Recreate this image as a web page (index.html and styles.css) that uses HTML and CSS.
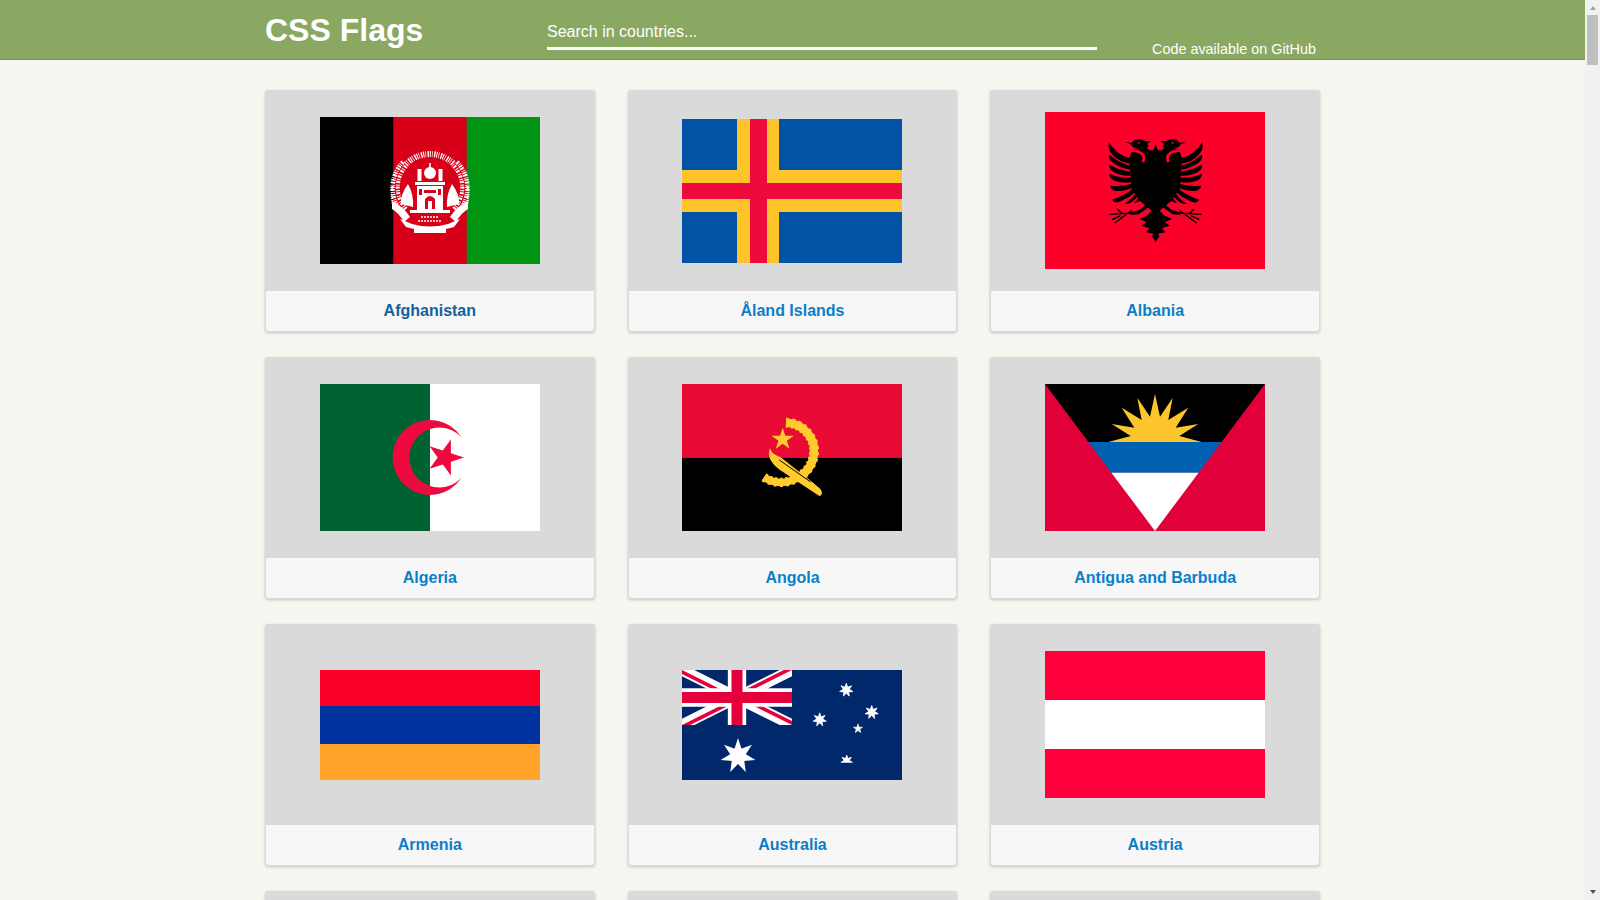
FILE: index.html
```html
<!DOCTYPE html>
<html>
<head>
    <meta name="viewport" content="width=device-width, initial-scale=1.0">
    <title>CSS Flags</title>
    <link rel="stylesheet" href="styles.css">
</head>
<body>
    <header class="topbar">
        <div class="topbar-inner">
            <h1 class="logo">CSS Flags</h1>
            <input class="search" type="text" placeholder="Search in countries...">
            <a class="github" href="#">Code available on GitHub</a>
        </div>
    </header>

    <main class="flags">
        <article class="card">
            <div class="flag-box">
                <svg class="flag" viewBox="0 0 220 147">
                    <rect width="220" height="147" fill="#d80018"/>
                    <rect width="73.3" height="147" fill="#000"/>
                    <rect x="146.7" width="73.3" height="147" fill="#009614"/>
                    <!-- wreath -->
                    <path d="M86 47A34 34 0 0 1 134 47" fill="none" stroke="#fff" stroke-width="6" stroke-dasharray="1 1.1 .7 1.5 1.4 .9"/>
                    <path d="M79 92A37.5 37.5 0 0 1 83 45M141 92A37.5 37.5 0 0 0 137 45" fill="none" stroke="#fff" stroke-width="4.5" stroke-dasharray="1.4 1 .8 1.3 2 .9"/>
                    <path d="M86 92A32 32 0 0 1 87 48M134 92A32 32 0 0 0 133 48" fill="none" stroke="#fff" stroke-width="4" stroke-dasharray="2 1 1 1.6"/>
                    <path d="M73.5 90A41 41 0 0 1 73 68M146.5 90A41 41 0 0 0 147 68" fill="none" stroke="#fff" stroke-width="2" stroke-dasharray="1 1"/>
                    <!-- mosque -->
                    <g fill="#fff">
                        <circle cx="110" cy="56" r="6"/>
                        <rect x="109.2" y="46" width="1.6" height="5"/>
                        <rect x="97.5" y="52" width="4" height="12"/>
                        <rect x="118.5" y="52" width="4" height="12"/>
                        <rect x="95" y="65" width="30" height="3"/>
                        <rect x="97" y="69" width="26" height="24"/>
                        <rect x="90" y="93" width="40" height="3"/>
                        <path d="M88 67Q80 78 81 87L93 90Q94 78 88 67Z"/>
                        <path d="M132 67Q140 78 139 87L127 90Q126 78 132 67Z"/>
                        <path d="M72 84Q84 90 90 100L84 105Q79 96 72 92Z"/>
                        <path d="M148 84Q136 90 130 100L136 105Q141 96 148 92Z"/>
                        <path d="M80 102L92 107Q110 112 128 107L140 102L134 110L126 112V116H94V112L86 110Z"/>
                    </g>
                    <g fill="#d80018">
                        <rect x="104" y="73" width="12" height="3"/>
                        <path d="M105 92V82Q110 76 115 82V92H112V84H108V92Z"/>
                        <rect x="99" y="72" width="3" height="6"/>
                        <rect x="118" y="72" width="3" height="6"/>
                    </g>
                    <path d="M101 100H119M98 104H122" stroke="#fff" stroke-width="1.5" stroke-dasharray="2 1"/>
                </svg>
            </div>
            <h2 class="name"><a class="hovered" href="#">Afghanistan</a></h2>
        </article>

        <article class="card">
            <div class="flag-box">
                <svg class="flag" viewBox="0 0 220 144">
                    <rect width="220" height="144" fill="#0053a5"/>
                    <rect x="55" width="42" height="144" fill="#ffc429"/>
                    <rect y="51" width="220" height="42" fill="#ffc429"/>
                    <rect x="68" width="17" height="144" fill="#ef0a3c"/>
                    <rect y="64" width="220" height="16" fill="#ef0a3c"/>
                </svg>
            </div>
            <h2 class="name"><a href="#">Åland Islands</a></h2>
        </article>

        <article class="card">
            <div class="flag-box">
                <svg class="flag" viewBox="0 0 220 157">
                    <rect width="220" height="157" fill="#fb0029"/>
                    <g transform="translate(45 13) scale(.3333)">
                        <g id="eagle-half">
                            <!-- body and neck -->
                            <path d="M198 88L198 56L190 76L178 76L168 66L128 72L118 100L124 190L150 228L198 268Z"/>
                            <!-- head -->
                            <path d="M104 50L124 54L134 44L150 42L166 48L184 48L172 56L176 66L150 72L128 66L122 58Z"/>
                            <!-- wing feathers -->
                            <path d="M120 100Q82 92 57 52Q52 72 68 90Q88 112 120 116Z"/>
                            <path d="M120 122Q84 114 58 88Q54 104 70 114Q92 130 120 134Z"/>
                            <path d="M120 140Q84 136 58 118Q56 134 72 142Q94 154 122 152Z"/>
                            <path d="M122 158Q88 160 58 146Q58 162 76 168Q100 176 126 170Z"/>
                            <path d="M126 176Q94 186 60 182Q64 198 84 198Q108 198 132 186Z"/>
                            <path d="M130 190Q102 214 66 224Q74 238 94 228Q118 218 140 198Z"/>
                            <path d="M140 198Q128 222 104 236Q118 240 132 226Q146 214 152 204Z"/>
                            <path d="M152 204Q148 220 132 234Q148 232 158 222Q164 214 164 208Z"/>
                            <!-- legs -->
                            <path d="M178 230L150 254L126 262L122 270L146 268L188 238Z"/>
                            <path d="M128 264L58 268M126 256L74 294M96 266L82 252M92 272L66 284" fill="none" stroke="#000" stroke-width="4"/>
                            <!-- tail -->
                            <path d="M176 230L198 228V352L186 334L190 326L168 322L178 310L154 302L170 292L148 282L170 272L184 258Z"/>
                        </g>
                        <use href="#eagle-half" transform="matrix(-1 0 0 1 394 0)"/>
                        <g fill="none" stroke="#fb0029" stroke-width="9" stroke-linecap="round">
                            <path d="M118 76Q150 76 160 92Q164 100 160 108"/>
                            <path d="M276 76Q244 76 234 92Q230 100 234 108"/>
                        </g>
                        <circle cx="146" cy="54" r="3" fill="#fb0029"/>
                        <circle cx="248" cy="54" r="3" fill="#fb0029"/>
                    </g>
                </svg>
            </div>
            <h2 class="name"><a href="#">Albania</a></h2>
        </article>

        <article class="card">
            <div class="flag-box">
                <svg class="flag" viewBox="0 0 220 147">
                    <rect width="220" height="147" fill="#fff"/>
                    <rect width="110" height="147" fill="#006233"/>
                    <path d="M141.5 53.3A37.4 37.4 0 1 0 141.5 93.7A30 30 0 1 1 141.5 53.3Z" fill="#ee0a3f"/>
                    <polygon points="144,73.5 130.9,77.8 130.9,91.6 122.8,80.4 109.6,84.7 117.7,73.5 109.6,62.3 122.8,66.6 130.9,55.4 130.9,69.2" fill="#ee0a3f"/>
                </svg>
            </div>
            <h2 class="name"><a href="#">Algeria</a></h2>
        </article>

        <article class="card">
            <div class="flag-box">
                <svg class="flag" viewBox="0 0 220 147">
                    <rect width="220" height="73.5" fill="#e90a35"/>
                    <rect y="73.5" width="220" height="73.5" fill="#000"/>
                    <g transform="translate(58 16) scale(.3333)">
                        <g fill="none" stroke="#ffcb2e">
                            <path d="M138 68C195 70 225 120 222 155C222 185 205 210 185 226" stroke-width="25"/>
                            <path d="M138 68C195 70 225 120 222 155C222 185 205 210 185 226" stroke-width="30" stroke-dasharray="8 9"/>
                            <path d="M72 232C100 250 140 256 185 226" stroke-width="23"/>
                            <path d="M72 232C100 250 140 256 185 226" stroke-width="28" stroke-dasharray="8 9"/>
                        </g>
                        <path d="M90 145C80 170 95 192 120 210L205 266L238 288C250 286 247 272 238 264L212 242L122 172C105 165 95 160 90 145Z" fill="#ffcb2e"/>
                        <path d="M118 180L212 246" stroke="#000" stroke-width="3"/>
                        <polygon points="128,83 135.9,107.2 161.3,107.2 140.7,122.1 148.6,146.3 128,131.4 107.4,146.3 115.3,122.1 94.7,107.2 120.1,107.2" fill="#ffcb2e"/>
                    </g>
                </svg>
            </div>
            <h2 class="name"><a href="#">Angola</a></h2>
        </article>

        <article class="card">
            <div class="flag-box">
                <svg class="flag" viewBox="0 0 220 147">
                    <rect width="220" height="147" fill="#e2003a"/>
                    <polygon points="0,0 220,0 176.6,58 43.4,58" fill="#000"/>
                    <polygon points="43.4,58 176.6,58 153.6,88.7 66.4,88.7" fill="#0061b3"/>
                    <polygon points="66.4,88.7 153.6,88.7 110,147" fill="#fff"/>
                    <polygon points="63.3,58 85.7,52 66.7,40 89.3,43.7 76.7,23.7 96.7,36 92.3,13.7 105,32.7 110,10 115,32.7 127.7,13.7 123.3,36 143.3,23.7 130.7,43.7 153.3,40 134.3,52 156.7,58" fill="#fdc52c"/>
                </svg>
            </div>
            <h2 class="name"><a href="#">Antigua and Barbuda</a></h2>
        </article>

        <article class="card">
            <div class="flag-box">
                <svg class="flag" viewBox="0 0 220 110">
                    <rect width="220" height="36" fill="#f90126"/>
                    <rect y="36" width="220" height="38" fill="#0033a0"/>
                    <rect y="74" width="220" height="36" fill="#ffa428"/>
                </svg>
            </div>
            <h2 class="name"><a href="#">Armenia</a></h2>
        </article>

        <article class="card">
            <div class="flag-box">
                <svg class="flag" viewBox="0 0 220 110">
                    <defs>
                        <clipPath id="union-t"><path d="M30 15H60V30ZV30H0ZH0V0ZV0H60Z"/></clipPath>
                        <clipPath id="crown-clip"><rect x="150" y="80" width="30" height="12.7"/></clipPath>
                        <polygon id="star7" points="0,-1 .1952,-.4054 .7818,-.6235 .4387,-.1001 .9749,.2225 .3518,.2806 .4339,.901 0,.45 -.4339,.901 -.3518,.2806 -.9749,.2225 -.4387,-.1001 -.7818,-.6235 -.1952,-.4054" fill="#fff" stroke="#fff" stroke-width=".12"/>
                    </defs>
                    <rect width="220" height="110" fill="#00286a"/>
                    <svg width="110" height="55" viewBox="0 0 60 30" preserveAspectRatio="none">
                        <path d="M0 0L60 30M60 0L0 30" stroke="#fff" stroke-width="6"/>
                        <path d="M0 0L60 30M60 0L0 30" stroke="#e4003b" stroke-width="4" clip-path="url(#union-t)"/>
                        <path d="M30 0V30M0 15H60" stroke="#fff" stroke-width="10"/>
                        <path d="M30 0V30M0 15H60" stroke="#e4003b" stroke-width="6"/>
                    </svg>
                    <use href="#star7" transform="translate(56 86) scale(15)"/>
                    <use href="#star7" transform="translate(164.3 20) scale(6.8)"/>
                    <use href="#star7" transform="translate(189.7 42.3) scale(6.8)"/>
                    <use href="#star7" transform="translate(137.7 49.7) scale(6.8)"/>
                    <polygon points="176,53.9 177.1,57.2 180.6,57.2 177.8,59.3 178.8,62.6 176,60.6 173.2,62.6 174.2,59.3 171.4,57.2 174.9,57.2" fill="#fff" stroke="#fff" stroke-width=".6"/>
                    <g clip-path="url(#crown-clip)">
                        <use href="#star7" transform="translate(164.7 91) scale(6)"/>
                    </g>
                </svg>
            </div>
            <h2 class="name"><a href="#">Australia</a></h2>
        </article>

        <article class="card">
            <div class="flag-box">
                <svg class="flag" viewBox="0 0 220 147">
                    <rect width="220" height="147" fill="#ff003d"/>
                    <rect y="49" width="220" height="49" fill="#fff"/>
                </svg>
            </div>
            <h2 class="name"><a href="#">Austria</a></h2>
        </article>

        <article class="card">
            <div class="flag-box">
                <svg class="flag" viewBox="0 0 220 110">
                    <rect width="220" height="37" fill="#00b5e2"/>
                    <rect y="37" width="220" height="36" fill="#ef3340"/>
                    <rect y="73" width="220" height="37" fill="#509e2f"/>
                </svg>
            </div>
            <h2 class="name"><a href="#">Azerbaijan</a></h2>
        </article>

        <article class="card">
            <div class="flag-box">
                <svg class="flag" viewBox="0 0 220 110">
                    <rect width="220" height="110" fill="#00778b"/>
                    <rect y="37" width="220" height="36" fill="#ffc72c"/>
                    <polygon points="0,0 95,55 0,110"/>
                </svg>
            </div>
            <h2 class="name"><a href="#">Bahamas</a></h2>
        </article>

        <article class="card">
            <div class="flag-box">
                <svg class="flag" viewBox="0 0 220 132">
                    <rect width="220" height="132" fill="#da291c"/>
                    <polygon points="0,0 55,0 88,13 55,26 88,39 55,52 88,66 55,79 88,92 55,105 88,119 55,132 0,132" fill="#fff"/>
                </svg>
            </div>
            <h2 class="name"><a href="#">Bahrain</a></h2>
        </article>
    </main>

    <div class="scrollbar">
        <span class="arrow-up"></span>
        <span class="thumb"></span>
        <span class="arrow-down"></span>
    </div>
</body>
</html>
```

FILE: styles.css
```css
body {
    margin: 0;
    padding-right: 15px;
    font-family: "Liberation Sans", Arial, sans-serif;
    background-color: #f4f6ef;
}
.scrollbar {
    position: fixed;
    top: 0;
    right: 0;
    bottom: 0;
    width: 15px;
    padding: 6px 0;
    box-sizing: border-box;
    display: flex;
    flex-direction: column;
    align-items: center;
    background-color: #f1f1f1;
}
.arrow-up {
    border-left: 3.5px solid transparent;
    border-right: 3.5px solid transparent;
    border-bottom: 4px solid #a3a3a3;
}
.thumb {
    width: 11px;
    height: 50px;
    margin-top: 5px;
    background-color: #bfbfbf;
}
.arrow-down {
    margin-top: auto;
    border-left: 3.5px solid transparent;
    border-right: 3.5px solid transparent;
    border-top: 4px solid #505050;
}
.topbar {
    height: 59px;
    background-color: #8ba862;
    border-bottom: 1px solid #74904f;
}
.topbar-inner {
    display: flex;
    align-items: flex-start;
    max-width: 1055px;
    margin: 0 auto;
}
.logo {
    width: 282px;
    margin: 12px 0 0 0;
    font-size: 32px;
    font-weight: bold;
    color: #fff;
}
.search {
    width: 550px;
    height: 31px;
    margin-top: 16px;
    padding: 0;
    box-sizing: content-box;
    background: transparent;
    border: none;
    border-bottom: 3px solid #fff;
    outline: none;
    font-family: inherit;
    font-size: 16px;
    color: #fff;
}
.search::placeholder {
    color: #fff;
    opacity: 1;
}
.github {
    margin: 41px 4px 0 auto;
    font-size: 14.4px;
    color: #fff;
    text-decoration: none;
}
.flags {
    display: grid;
    grid-template-columns: repeat(3, 1fr);
    grid-auto-rows: 242px;
    gap: 25px 33px;
    max-width: 1055px;
    margin: 0 auto;
    padding-top: 30px;
}
.card {
    display: flex;
    flex-direction: column;
    background-color: #dadada;
    border-radius: 3px;
    box-shadow: 0 1px 3px rgba(0, 0, 0, 0.2);
}
.flag-box {
    display: flex;
    flex: 1;
    align-items: center;
    justify-content: center;
}
.flag {
    display: block;
    width: 220px;
}
.name {
    margin: 0 1px 1px 1px;
    height: 40px;
    background-color: #f7f7f7;
    border-radius: 0 0 3px 3px;
    font-size: 16px;
    line-height: 39px;
    text-align: center;
}
.name a {
    color: #0a7fc8;
    text-decoration: none;
}
.name a.hovered {
    color: #10629b;
}
```
